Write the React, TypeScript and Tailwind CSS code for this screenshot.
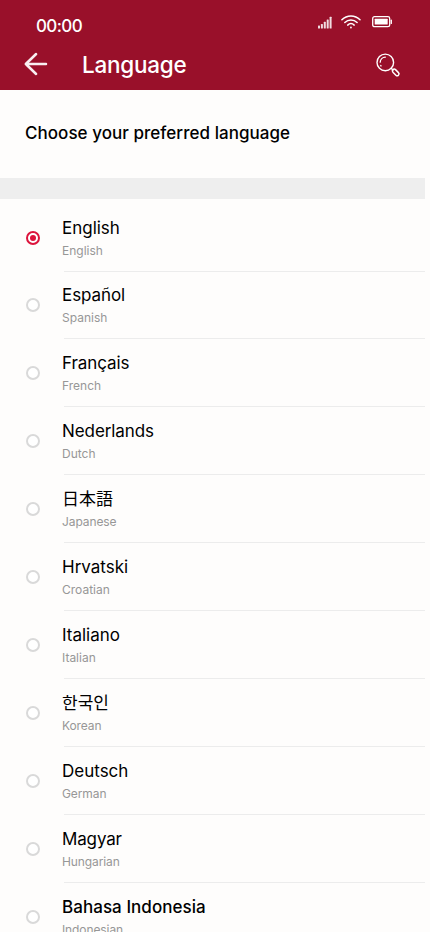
type Language = { name: string; label: string; row: string; text?: string; sub?: string };

const languages: Language[] = [
  { name: "English", label: "English", row: "h-[68px] pt-[14px]", text: "tracking-[-0.02px]" },
  { name: "Español", label: "Spanish", row: "h-[67px] pt-[13px]", text: "tracking-[-0.08px]" },
  { name: "Français", label: "French", row: "h-[68px] pt-[14px]", text: "tracking-[-0.08px]" },
  { name: "Nederlands", label: "Dutch", row: "h-[68px] pt-[14px]", text: "tracking-[-0.08px]" },
  { name: "日本語", label: "Japanese", row: "h-[68px] pt-[14px]", sub: "tracking-[-0.1px]" },
  { name: "Hrvatski", label: "Croatian", row: "h-[68px] pt-[14px]" },
  { name: "Italiano", label: "Italian", row: "h-[68px] pt-[14px]" },
  { name: "한국인", label: "Korean", row: "h-[68px] pt-[14px]", sub: "tracking-[-0.1px]" },
  { name: "Deutsch", label: "German", row: "h-[68px] pt-[14px]", sub: "tracking-[-0.1px]" },
  { name: "Magyar", label: "Hungarian", row: "h-[68px] pt-[14px]", text: "tracking-[-0.15px]", sub: "tracking-[-0.1px]" },
  { name: "Bahasa Indonesia", label: "Indonesian", row: "h-[68px] pt-[14px]", text: "font-medium tracking-[0.05px]", sub: "tracking-[-0.1px]" },
];

function Signal() {
  return (
    <svg width="14" height="13" viewBox="0 0 14 13" fill="#fff" fillOpacity="0.85">
      <rect x="0" y="9.6" width="2" height="2.8" rx="0.5" />
      <rect x="2.9" y="8" width="2" height="4.4" rx="0.5" />
      <rect x="5.8" y="5.8" width="2" height="6.6" rx="0.5" />
      <rect x="8.7" y="3.4" width="2" height="9" rx="0.5" />
      <rect x="11.6" y="0.8" width="2" height="11.6" rx="0.5" />
    </svg>
  );
}

function Wifi() {
  return (
    <svg width="20" height="14" viewBox="0 0 20 14" fill="none" stroke="#fff" strokeWidth="1.5" strokeLinecap="round">
      <path d="M0.9 4.8C6 -0.3 13.9 -0.3 19 4.8" />
      <path d="M3.8 7.5C7.3 4 12.6 4 16.1 7.5" />
      <path d="M6.7 10.1C8.6 8.3 11.3 8.3 13.2 10.1" />
      <circle cx="9.95" cy="12.5" r="0.9" fill="#fff" stroke="none" />
    </svg>
  );
}

function Battery() {
  return (
    <svg width="21" height="12" viewBox="0 0 21 12" fill="none">
      <rect x="0.7" y="0.7" width="17" height="10" rx="1.8" stroke="#fff" strokeWidth="1.3" />
      <rect x="2.7" y="2.8" width="13" height="5.8" rx="0.5" fill="#fff" />
      <path d="M19.3 4.2v3.2" stroke="#fff" strokeWidth="1.3" strokeLinecap="round" />
    </svg>
  );
}

function BackArrow() {
  return (
    <svg width="26" height="24" viewBox="0 0 26 24" fill="none" stroke="#f9eff1" strokeWidth="2.5" strokeLinecap="round" strokeLinejoin="round">
      <path d="M23 12H2.8M13.1 2L2.8 12l10.3 10" />
    </svg>
  );
}

function Search() {
  return (
    <svg width="26" height="26" viewBox="0 0 26 26" fill="none" stroke="#fff" strokeLinecap="round">
      <circle cx="9.3" cy="9.4" r="8.3" strokeWidth="1.4" />
      <path d="M4.2 9.2A5.3 5.3 0 0 1 9.3 4.2" strokeWidth="1.3" />
      <path d="M4.8 12.6l.2.3" strokeWidth="1.4" />
      <path d="M15.2 15.3l1.7 1.7" strokeWidth="1.4" />
      <rect x="15.8" y="17.6" width="7.8" height="3.6" rx="1.8" transform="rotate(45 19.7 19.4)" strokeWidth="1.5" />
    </svg>
  );
}

function Radio({ checked }: { checked: boolean }) {
  return (
    <span
      role="radio"
      aria-checked={checked}
      className={
        checked
          ? "flex size-[14px] items-center justify-center rounded-full border-2 border-[#dc143c] bg-white"
          : "flex size-[14px] items-center justify-center rounded-full border-2 border-[#d9d9d9] bg-white"
      }
    >
      {checked && <span className="size-[6px] rounded-full bg-[#dc143c]" />}
    </span>
  );
}

export default function App() {
  return (
    <div className="h-[932px] w-[430px] overflow-hidden bg-[#fefdfc] font-['Inter','Noto_Sans_CJK_JP','Noto_Sans_CJK_KR',sans-serif] text-black">
      <header className="h-[90px] bg-[#99102a] text-white">
        <div className="flex h-[42px] items-start pl-9">
          <span className="mt-[14px] w-[282px] text-[17px] leading-6 font-medium tracking-[-0.6px]">00:00</span>
          <div className="mt-4 flex items-start">
            <Signal />
            <div className="-mt-px ml-[9px]"><Wifi /></div>
            <div className="ml-[11px]"><Battery /></div>
          </div>
        </div>
        <div className="flex h-12 items-start pl-[23px]">
          <button aria-label="Back" className="mt-[10px]"><BackArrow /></button>
          <h1 className="mt-[7px] ml-[33px] w-[294px] text-[22.5px] leading-8 font-medium tracking-[-0.25px]">Language</h1>
          <button aria-label="Search" className="mt-[11px]"><Search /></button>
        </div>
      </header>
      <main className="w-[425px]">
        <h2 className="h-[88px] pt-[31px] pl-[25px] text-[17px] leading-6 font-medium tracking-[0.04px]">Choose your preferred language</h2>
        <div className="h-[21px] bg-[#eeeeee]" />
        <div role="radiogroup" className="pt-[5px]">
          {languages.map((l, i) => (
            <div key={l.label} className="flex items-start pl-[26px]">
              <div className={i === 1 ? "w-9 pt-[26px]" : "w-9 pt-[27px]"}><Radio checked={i === 0} /></div>
              <div className={`flex-1 bg-[linear-gradient(#ececec,#ececec)] bg-[length:calc(100%-2px)_1px] bg-right-bottom bg-no-repeat ${l.row}`}>
                <div className={`h-[21px] text-[17px] leading-[21px] ${l.text ?? ""}`}>{l.name}</div>
                <div className={`mt-1 text-[12px] leading-4 text-[#979797] ${l.sub ?? ""}`}>{l.label}</div>
              </div>
            </div>
          ))}
        </div>
      </main>
    </div>
  );
}
